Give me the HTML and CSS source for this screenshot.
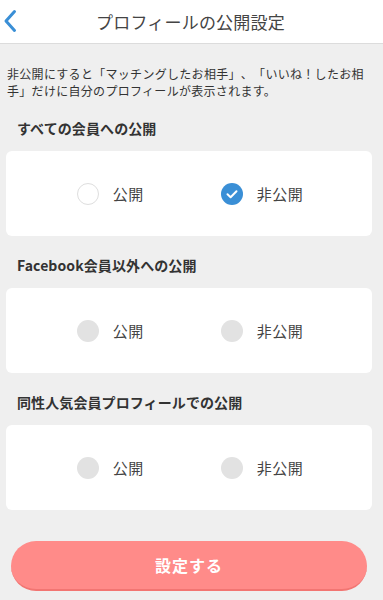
FILE: index.html
```html
<!DOCTYPE html>
<html lang="ja">
<head>
<meta charset="utf-8">
<title>プロフィールの公開設定</title>
<link rel="stylesheet" href="styles.css">
</head>
<body>
<header class="header">
  <a class="back" href="#" aria-label="戻る">
    <svg width="14" height="24" viewBox="0 0 14 24"><path d="M11.5 2.5 L3 12 L11.5 21.5" fill="none" stroke="#3a8fd6" stroke-width="3" stroke-linecap="round" stroke-linejoin="round"/></svg>
  </a>
  <h1 class="title">プロフィールの公開設定</h1>
</header>
<main class="main">
  <p class="desc">非公開にすると「マッチングしたお相手」、「いいね！したお相手」だけに自分のプロフィールが表示されます。</p>

  <h2 class="sec-title">すべての会員への公開</h2>
  <div class="card">
    <div class="option"><span class="radio radio-off"></span><span class="label">公開</span></div>
    <div class="option"><span class="radio radio-on"><svg width="22" height="22" viewBox="0 0 22 22"><path d="M6.5 11.3 L9.6 14.2 L15.5 8.2" fill="none" stroke="#fff" stroke-width="2" stroke-linecap="round" stroke-linejoin="round"/></svg></span><span class="label">非公開</span></div>
  </div>

  <h2 class="sec-title">Facebook会員以外への公開</h2>
  <div class="card">
    <div class="option"><span class="radio radio-disabled"></span><span class="label">公開</span></div>
    <div class="option"><span class="radio radio-disabled"></span><span class="label">非公開</span></div>
  </div>

  <h2 class="sec-title">同性人気会員プロフィールでの公開</h2>
  <div class="card">
    <div class="option"><span class="radio radio-disabled"></span><span class="label">公開</span></div>
    <div class="option"><span class="radio radio-disabled"></span><span class="label">非公開</span></div>
  </div>

  <button class="submit" type="button">設定する</button>
</main>
</body>
</html>
```

FILE: styles.css
```css
* { box-sizing: border-box; }
html, body {
  margin: 0;
  padding: 0;
  background: #efefef;
  font-family: "Noto Sans CJK JP", "Noto Sans", sans-serif;
  color: #333;
  text-spacing-trim: space-all;
}
.header {
  height: 44px;
  background: #fff;
  border-bottom: 1px solid #dcdcdc;
  display: flex;
  align-items: center;
  justify-content: center;
  position: relative;
}
.back {
  position: absolute;
  left: 3px;
  top: 9px;
  display: flex;
}
.title {
  margin: 0;
  font-size: 17px;
  font-weight: 400;
  color: #444;
  letter-spacing: 0.2px;
  padding-right: 2px;
}
.main {
  padding: 21px 11px 12px 6px;
  display: flex;
  flex-direction: column;
}
.desc {
  margin: 0 0 0 1px;
  font-size: 12px;
  line-height: 17px;
  letter-spacing: 0.3px;
  color: #333;
  text-spacing-trim: space-all;
}
.sec-title {
  margin: 19px 0 13px 11px;
  font-size: 14px;
  line-height: 20px;
  font-weight: 700;
  color: #333;
  letter-spacing: 0.1px;
}
.card {
  height: 85px;
  background: #fff;
  border-radius: 6px;
  display: flex;
  align-items: center;
  justify-content: center;
  gap: 77px;
  padding-left: 2px;
}
.option {
  display: flex;
  align-items: center;
  gap: 14px;
}
.radio {
  width: 22px;
  height: 22px;
  border-radius: 50%;
  display: flex;
}
.radio-off {
  background: #fff;
  border: 1px solid #dedede;
}
.radio-on {
  background: #3a8fd6;
}
.radio-disabled {
  background: #e2e2e2;
}
.label {
  font-size: 15px;
  line-height: 20px;
  color: #444;
  letter-spacing: 0.5px;
}
.submit {
  margin: 31px 0 0 5px;
  height: 50px;
  width: 356px;
  border: none;
  border-bottom: 2px solid #f27572;
  border-radius: 25px;
  background: #ff8b89;
  color: #fff;
  font-family: "Noto Sans CJK JP", "Noto Sans", sans-serif;
  font-size: 16px;
  font-weight: 700;
  letter-spacing: 1px;
  padding: 0;
}
```
